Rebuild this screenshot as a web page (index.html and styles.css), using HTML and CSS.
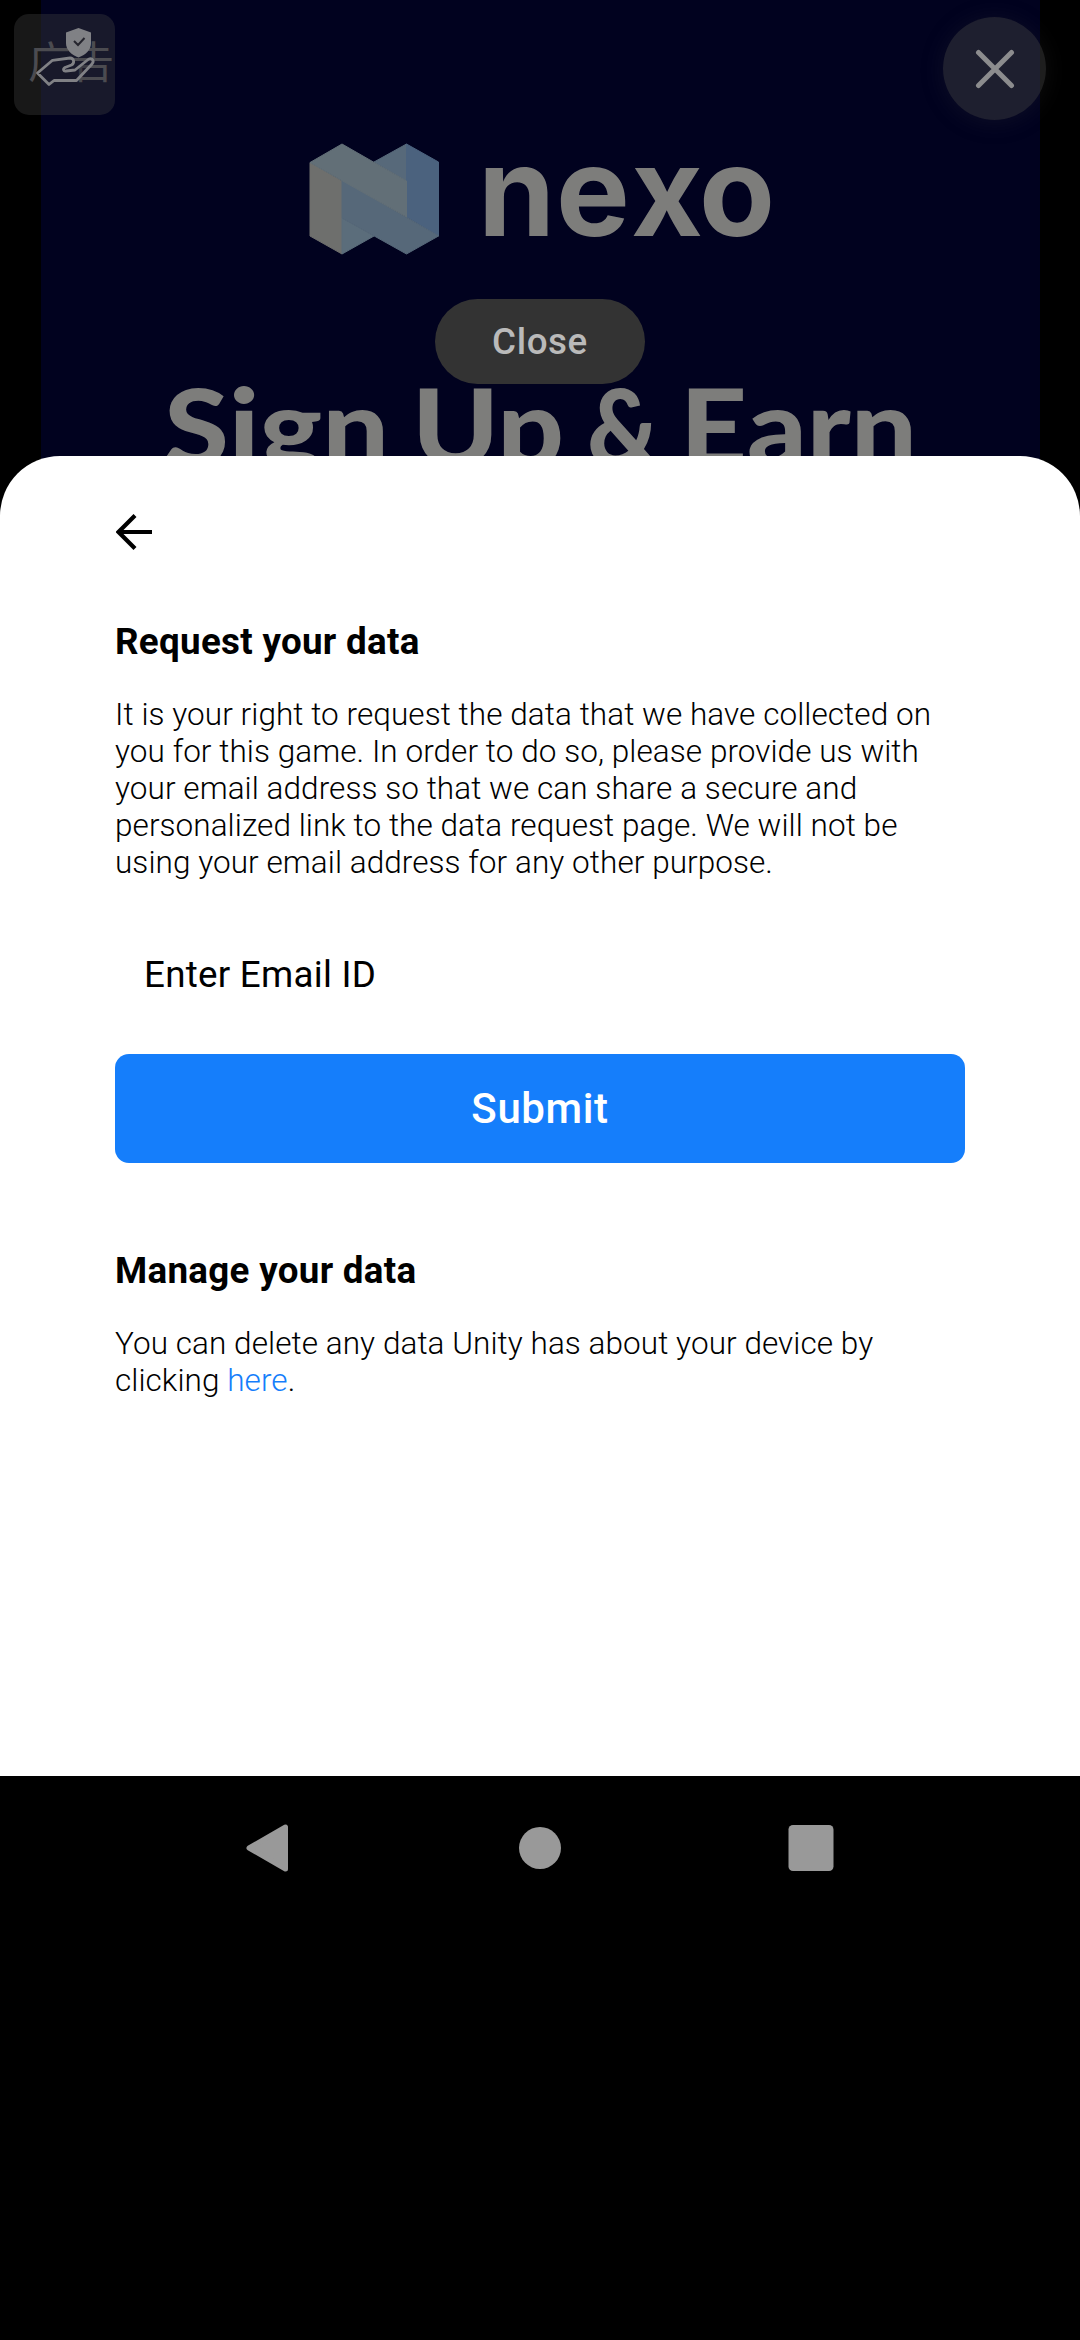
FILE: index.html
```html
<!DOCTYPE html>
<html lang="en">
<head>
<meta charset="utf-8">
<title>Request your data</title>
<link rel="stylesheet" href="styles.css">
</head>
<body>
<main class="screen">
  <section class="ad">
    <div class="creative">
      <svg class="logo" width="461" height="112" viewBox="0 0 461 112" role="img" aria-label="nexo">
        <path fill="#6e6f6d" stroke="#6e6f6d" d="M0 18.500 32 37V110L0 92z"/>
        <path fill="#57697a" stroke="#57697a" d="M64 18 96.500 0V37z"/>
        <path fill="#4b627e" stroke="#4b627e" d="M96.500 0 128.500 18V92L96.500 73z"/>
        <path fill="#5b6d7b" stroke="#5b6d7b" d="M32 74 64 92 32 110z"/>
        <path fill="#566879" stroke="#566879" d="M32 36 128.500 92 96.500 110 32 74z"/>
        <path fill="#626f77" stroke="#626f77" d="M0 18.500 32 0 96.500 37V73z"/>
        <text class="wordmark" y="92" x="168 246 321 389">nexo</text>
      </svg>
      <svg class="headline" width="760" height="110" viewBox="0 0 760 110">
        <text y="86" x="3" textLength="225" lengthAdjust="spacingAndGlyphs">Sign</text>
        <text y="86" x="251" textLength="152" lengthAdjust="spacingAndGlyphs">Up</text>
        <text y="86" x="426" textLength="72" lengthAdjust="spacingAndGlyphs">&amp;</text>
        <text y="86" x="519" textLength="237" lengthAdjust="spacingAndGlyphs">Earn</text>
      </svg>
    </div>
    <div class="privacy">
      <span class="ad-label" lang="zh">广告</span>
      <svg class="hand" width="102" height="102" viewBox="0 0 102 102">
        <path fill="#808185" d="M64.500 14 77 18.500V29c0 7-5 11.500-12.500 14.500C57 40.500 52 36 52 29V18.500z"/>
        <path fill="none" stroke="#25252e" stroke-width="2" d="m60 27 4 4 6.500-7"/>
        <path fill="#1a1a28" fill-opacity=".35" stroke="#808185" stroke-width="2.800" stroke-linejoin="round" d="M23.500 59 38.500 46.300 56 44C60 44 61 49 57.500 51L51 53.500C48.500 55 49.500 57.500 52 57L61 56 73.500 46C77 43 81 46 78 50L62.500 66.500H40L35 70.500z"/>
      </svg>
    </div>
    <div class="dismiss">
      <svg width="40" height="40" viewBox="0 0 40 40"><path fill="none" stroke="#8c8c8e" stroke-width="5" stroke-linecap="round" d="m3.500 3.500 33 33m0-33-33 33"/></svg>
    </div>
    <div class="close-pill">Close</div>
  </section>

  <section class="sheet">
    <svg class="back" width="38" height="38" viewBox="0 0 38 38"><path fill="none" stroke="#000" stroke-width="4.200" d="M36 19H4M19 2.500 2.500 19 19 35.500"/></svg>
    <h2>Request your data</h2>
    <p>It is your right to request the data that we have collected on<br>you for this game. In order to do so, please provide us with<br>your email address so that we can share a secure and<br>personalized link to the data request page. We will not be<br>using your email address for any other purpose.</p>
    <div class="email">Enter Email ID</div>
    <div class="submit">Submit</div>
    <h2>Manage your data</h2>
    <p>You can delete any data Unity has about your device by<br>clicking <span class="link">here</span>.</p>
  </section>

  <nav class="navbar">
    <svg width="46" height="50" viewBox="0 0 46 50"><path d="M39.500 4v42L3 25z" stroke-width="5" stroke-linejoin="round"/></svg>
    <svg width="46" height="50" viewBox="0 0 46 50"><circle cx="23" cy="25" r="21"/></svg>
    <svg width="46" height="50" viewBox="0 0 46 50"><rect x="0.500" y="2" width="45" height="46" rx="4.500"/></svg>
  </nav>
</main>
</body>
</html>
```
FILE: styles.css
```css
body {
  margin: 0;
  background: #000;
  font-family: Roboto, "Liberation Sans", sans-serif;
  color: #000;
}

.screen {
  display: flex;
  flex-direction: column;
  height: 2340px;
  overflow: hidden;
}

/* Dimmed ad behind the sheet */
.ad {
  position: relative;
  height: 456px;
}

.creative {
  display: flex;
  flex-direction: column;
  align-items: center;
  box-sizing: border-box;
  width: 999px;
  height: 520px;
  margin-left: 41px;
  padding-top: 144px;
  background: #01021f;
}

.logo {
  display: block;
  overflow: visible;
}

.wordmark {
  fill: #7d7d7b;
  font: 650 124px Inter, sans-serif;
}

.headline {
  display: block;
  margin-top: 124px;
  overflow: visible;
  fill: #7d7d7b;
  font: 900 107px Lato, sans-serif;
}

.privacy {
  position: absolute;
  left: 14px;
  top: 14px;
  width: 101px;
  height: 101px;
  border-radius: 15px;
  background: rgba(66, 66, 66, .36);
}

.ad-label {
  position: absolute;
  left: 14px;
  top: 15px;
  font: 400 43px/60px "Noto Sans CJK SC", sans-serif;
  color: #4b4b50;
}

.hand {
  position: absolute;
  left: 0;
  top: 0;
}

.dismiss {
  position: absolute;
  left: 943px;
  top: 17px;
  display: grid;
  place-items: center;
  width: 103px;
  height: 103px;
  border-radius: 50%;
  background: rgba(66, 66, 66, .45);
  box-shadow: 0 2px 24px rgba(70, 70, 70, .2);
}

.close-pill {
  position: absolute;
  left: 435px;
  top: 299px;
  width: 210px;
  height: 85px;
  border-radius: 43px;
  background: #333;
  color: #bababa;
  font-size: 36.75px;
  font-weight: 500;
  letter-spacing: .6px;
  line-height: 85px;
  text-align: center;
}

.sheet {
  position: relative;
  display: flex;
  flex-direction: column;
  box-sizing: border-box;
  height: 1320px;
  padding: 57px 115px 0;
  border-radius: 60px 60px 0 0;
  background: #fff;
}

.back {
  margin-left: 1px;
}

h2 {
  margin: 69px 0 0;
  font-size: 36.75px;
  font-weight: 700;
  letter-spacing: .3px;
  line-height: 43px;
}

p {
  margin: 33px 0 0;
  font-size: 31.5px;
  font-weight: 300;
  letter-spacing: .06px;
  line-height: 37px;
  white-space: nowrap;
}

.email {
  margin-top: 57px;
  padding: 12px 29px;
  font-size: 36.75px;
  letter-spacing: .26px;
  line-height: 49px;
}

.submit {
  margin-top: 43px;
  height: 109px;
  border-radius: 14px;
  background: #157efb;
  color: #fff;
  font-size: 42px;
  font-weight: 500;
  letter-spacing: .6px;
  line-height: 109px;
  text-align: center;
}

.submit + h2 {
  margin-top: 86px;
}

.link {
  color: #157efb;
}

.navbar {
  display: flex;
  justify-content: space-between;
  box-sizing: border-box;
  padding: 47px 246px 0;
  fill: #999;
  stroke: none;
}

.navbar path {
  stroke: #999;
}
```
